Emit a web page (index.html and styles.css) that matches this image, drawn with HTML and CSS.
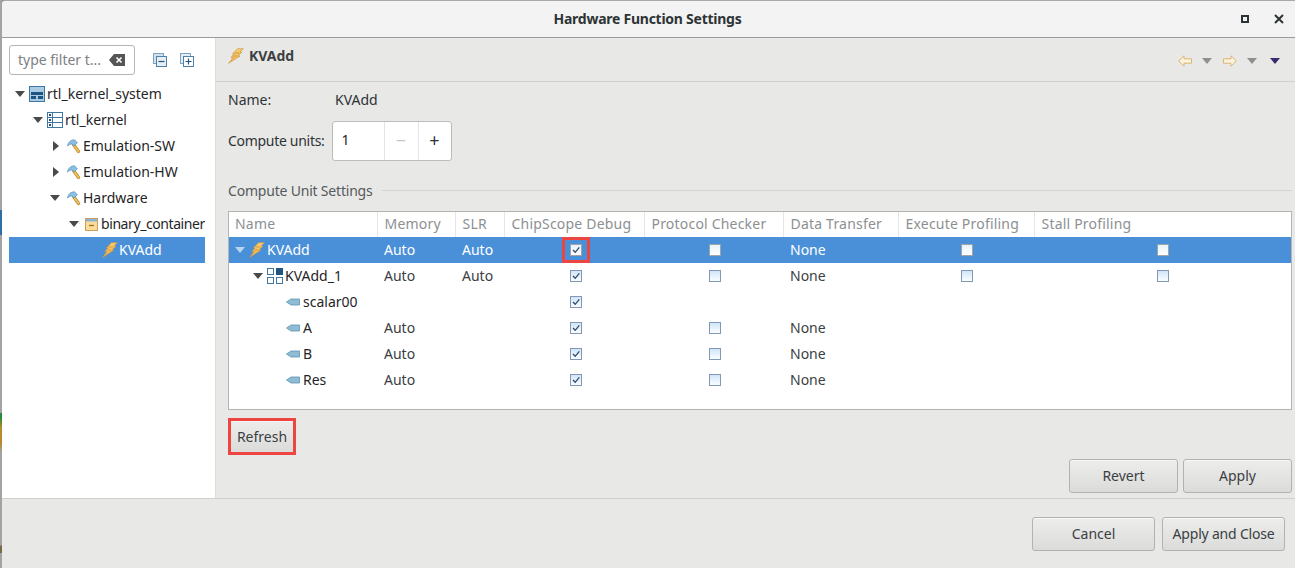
FILE: index.html
```html
<!DOCTYPE html>
<html lang="en">
<head>
<meta charset="utf-8">
<title>Hardware Function Settings</title>
<link rel="stylesheet" href="styles.css">
</head>
<body>
<svg class="defs" width="0" height="0" aria-hidden="true">
  <defs>
    <linearGradient id="cbfill" x1="0" y1="0" x2="0" y2="1"><stop offset="0" stop-color="#cde5f8"/><stop offset="1" stop-color="#fdfeff"/></linearGradient>
    <linearGradient id="cbfillsel" x1="0" y1="0" x2="0" y2="1"><stop offset="0" stop-color="#e6f3fd"/><stop offset="1" stop-color="#fff"/></linearGradient>
    <linearGradient id="boltfill" x1="0" y1="0" x2="0" y2="1"><stop offset="0" stop-color="#f7cf72"/><stop offset="1" stop-color="#eeb04a"/></linearGradient>
  </defs>
  <symbol id="bolt" viewBox="0 0 16 16"><path d="M9.500.7H15.300L12 4h2L10 8h2L.7 15.300 5 9.500H3L6 6H4.500z" fill="url(#boltfill)" stroke="#cf9a45" stroke-width=".7" stroke-linejoin="round"/><path d="M6.500 5h5M5.500 8h4" stroke="#c98d2e" stroke-width=".7"/></symbol>
  <symbol id="hammer" viewBox="0 0 14 16"><path d="M6.500 6.500l5 7" stroke="#bd8a2a" stroke-width="3.200" stroke-linecap="round"/><path d="M6.500 6.500l5 7" stroke="#f0c767" stroke-width="1.600" stroke-linecap="round"/><path d="M.5 8C1.300 4 4 1.800 7.500 1.800L10.300 4.700 7 8 5 6C3.500 6 2 6.500.5 8z" fill="#8cc0e2" stroke="#4f8fbd" stroke-width=".7" stroke-linejoin="round"/></symbol>
  <symbol id="down" viewBox="0 0 10 6"><path d="M0 0h10L5 6z"/></symbol>
  <symbol id="right" viewBox="0 0 6 10"><path d="M0 0l6 5-6 5z"/></symbol>
  <symbol id="port" viewBox="0 0 14 8"><path d="M.5 4L5 1h8.500v6H5z" fill="#8fbcd4" stroke="#5d93b2" stroke-width=".8"/></symbol>
  <symbol id="check" viewBox="0 0 12 12"><rect x=".5" y=".5" width="11" height="11" fill="url(#cbfill)" stroke="#8398b5"/></symbol>
  <symbol id="checked" viewBox="0 0 12 12"><rect x=".5" y=".5" width="11" height="11" fill="url(#cbfill)" stroke="#8398b5"/><path d="M3 6l2.200 2.300L9.300 3.300" fill="none" stroke="#2f4c6a" stroke-width="1.300"/></symbol>
  <symbol id="check-sel" viewBox="0 0 12 12"><rect x=".5" y=".5" width="11" height="11" fill="url(#cbfillsel)" stroke="#a0a4aa"/></symbol>
  <symbol id="checked-sel" viewBox="0 0 12 12"><rect x=".5" y=".5" width="11" height="11" fill="url(#cbfillsel)" stroke="#a0a4aa"/><path d="M3 6l2.200 2.300L9.300 3.300" fill="none" stroke="#2f4c6a" stroke-width="1.300"/></symbol>
</svg>

<div class="window">
  <div class="edge"></div>
  <div class="frame">
    <header class="titlebar">
      <h1 class="title">Hardware Function Settings</h1>
      <div class="winctl">
        <span class="maximize"></span>
        <svg class="close" width="10" height="10" viewBox="0 0 10 10"><path d="M1 1l8 8M9 1l-8 8" stroke="#2e3436" stroke-width="2"/></svg>
      </div>
    </header>

    <div class="body">
      <aside class="sidebar">
        <div class="filterbar">
          <div class="filter">
            <span class="filter-text">type filter t...</span>
            <svg width="16" height="12" viewBox="0 0 16 12"><path d="M5 0h11v12H5L0 6z" fill="#555"/><path d="M7.500 3.500l5 5M12.500 3.500l-5 5" stroke="#fff" stroke-width="1.600"/></svg>
          </div>
          <svg class="tool" width="14" height="14" viewBox="0 0 14 14"><rect x=".5" y=".5" width="10" height="10" fill="#cfe0ee" stroke="#7fa3c2"/><rect x="3.500" y="3.500" width="10" height="10" fill="#e6eff6" stroke="#4f81a8"/><path d="M5.500 8.500h6" stroke="#23557f" stroke-width="1.200"/></svg>
          <svg class="tool" width="14" height="14" viewBox="0 0 14 14"><rect x=".5" y=".5" width="10" height="10" fill="#e3ecf3" stroke="#7fa3c2"/><rect x="3.500" y="3.500" width="10" height="10" fill="#fff" stroke="#4f81a8"/><path d="M5.500 8.500h6M8.500 5.500v6" stroke="#23557f" stroke-width="1.200"/></svg>
        </div>
        <ul class="tree">
          <li class="node lvl0"><svg class="tw-d"><use href="#down"/></svg>
            <svg class="ico16" viewBox="0 0 16 16"><rect x=".5" y=".5" width="15" height="15" fill="#a9cbe4" stroke="#3f77a3"/><rect x="2" y="6" width="12" height="3" fill="#1f5583"/><rect x="2" y="10" width="5" height="3" fill="#1f5583"/><rect x="9" y="10" width="5" height="3" fill="#1f5583"/></svg>
            <span>rtl_kernel_system</span></li>
          <li class="node lvl1"><svg class="tw-d"><use href="#down"/></svg>
            <svg class="ico16" viewBox="0 0 16 16"><rect x=".5" y=".5" width="15" height="15" fill="#fff" stroke="#3f77a3"/><path d="M1 5.500h14M1 10.500h14M5.500 1v14" stroke="#3f77a3"/><rect x="2" y="2" width="2" height="2" fill="#1f4f7a"/><rect x="2" y="7" width="2" height="2" fill="#1f4f7a"/><rect x="2" y="12" width="2" height="2" fill="#1f4f7a"/></svg>
            <span>rtl_kernel</span></li>
          <li class="node lvl2"><svg class="tw-r"><use href="#right"/></svg><svg class="hammer"><use href="#hammer"/></svg><span>Emulation-SW</span></li>
          <li class="node lvl2"><svg class="tw-r"><use href="#right"/></svg><svg class="hammer"><use href="#hammer"/></svg><span>Emulation-HW</span></li>
          <li class="node lvl2"><svg class="tw-d"><use href="#down"/></svg><svg class="hammer"><use href="#hammer"/></svg><span>Hardware</span></li>
          <li class="node lvl3"><svg class="tw-d"><use href="#down"/></svg>
            <svg class="ico12" viewBox="0 0 13 13"><rect x=".5" y=".5" width="12" height="12" fill="#fbdc9b" stroke="#c9a05a"/><rect x="1" y="1" width="11" height="2.500" fill="#8ab4d6"/><path d="M4 7.500h5" stroke="#9c6f25" stroke-width="1.300"/></svg>
            <span class="tight">binary_container</span></li>
          <li class="node lvl4 selected"><svg class="bolt"><use href="#bolt"/></svg><span>KVAdd</span></li>
        </ul>
      </aside>

      <main class="main">
        <div class="pagehead">
          <svg class="bolt"><use href="#bolt"/></svg>
          <h2 class="pagetitle">KVAdd</h2>
          <div class="nav">
            <svg width="14" height="12" viewBox="0 0 14 12"><path d="M.7 6L6 .8v3h7.500v4.400H6v3z" fill="#fbf2dd" stroke="#d9b571"/></svg>
            <svg class="navdown"><use href="#down"/></svg>
            <svg width="14" height="12" viewBox="0 0 14 12"><path d="M13.300 6L8 .8v3H.5v4.400H8v3z" fill="#fbf2dd" stroke="#d9b571"/></svg>
            <svg class="navdown"><use href="#down"/></svg>
            <svg class="navmenu"><use href="#down"/></svg>
          </div>
        </div>

        <div class="form">
          <div class="namerow"><span class="lbl-name">Name:</span><span>KVAdd</span></div>
          <div class="unitsrow">
            <span class="lbl-units">Compute units:</span>
            <div class="spinner">
              <span class="sp-val">1</span>
              <span class="sp-btn sp-off">−</span>
              <span class="sp-btn">+</span>
            </div>
          </div>
          <div class="group"><span class="grouplabel">Compute Unit Settings</span><i class="rule"></i></div>

          <div class="tablebox">
            <table class="grid">
              <colgroup><col class="c1"><col class="c2"><col class="c3"><col class="c4"><col class="c5"><col class="c6"><col class="c7"><col class="c8"></colgroup>
              <thead>
                <tr><th>Name</th><th>Memory</th><th>SLR</th><th>ChipScope Debug</th><th>Protocol Checker</th><th>Data Transfer</th><th>Execute Profiling</th><th>Stall Profiling</th></tr>
              </thead>
              <tbody>
                <tr class="sel">
                  <td><div class="tn in0"><svg class="tw-d tw-light"><use href="#down"/></svg><svg class="bolt"><use href="#bolt"/></svg><span>KVAdd</span></div></td>
                  <td>Auto</td><td>Auto</td>
                  <td class="ck"><span class="redbox"><svg class="cb"><use href="#checked-sel"/></svg></span></td>
                  <td class="ck ckp"><svg class="cb"><use href="#check-sel"/></svg></td>
                  <td>None</td>
                  <td class="ck ckx"><svg class="cb"><use href="#check-sel"/></svg></td>
                  <td class="ck cks"><svg class="cb"><use href="#check-sel"/></svg></td>
                </tr>
                <tr>
                  <td><div class="tn in1"><svg class="tw-d"><use href="#down"/></svg>
                    <svg class="ico16" viewBox="0 0 16 16"><g fill="#fff" stroke="#3f77a3"><rect x=".5" y=".5" width="6" height="6"/><rect x=".5" y="9.500" width="6" height="6"/><rect x="9.500" y="9.500" width="6" height="6"/></g><rect x="9" y="0" width="7" height="7" fill="#1f5583"/></svg>
                    <span>KVAdd_1</span></div></td>
                  <td>Auto</td><td>Auto</td>
                  <td class="ck"><svg class="cb"><use href="#checked"/></svg></td>
                  <td class="ck ckp"><svg class="cb"><use href="#check"/></svg></td>
                  <td>None</td>
                  <td class="ck ckx"><svg class="cb"><use href="#check"/></svg></td>
                  <td class="ck cks"><svg class="cb"><use href="#check"/></svg></td>
                </tr>
                <tr>
                  <td><div class="tn in2"><svg class="port"><use href="#port"/></svg><span>scalar00</span></div></td>
                  <td></td><td></td>
                  <td class="ck"><svg class="cb"><use href="#checked"/></svg></td>
                  <td></td><td></td><td></td><td></td>
                </tr>
                <tr>
                  <td><div class="tn in2"><svg class="port"><use href="#port"/></svg><span>A</span></div></td>
                  <td>Auto</td><td></td>
                  <td class="ck"><svg class="cb"><use href="#checked"/></svg></td>
                  <td class="ck ckp"><svg class="cb"><use href="#check"/></svg></td>
                  <td>None</td><td></td><td></td>
                </tr>
                <tr>
                  <td><div class="tn in2"><svg class="port"><use href="#port"/></svg><span>B</span></div></td>
                  <td>Auto</td><td></td>
                  <td class="ck"><svg class="cb"><use href="#checked"/></svg></td>
                  <td class="ck ckp"><svg class="cb"><use href="#check"/></svg></td>
                  <td>None</td><td></td><td></td>
                </tr>
                <tr>
                  <td><div class="tn in2"><svg class="port"><use href="#port"/></svg><span>Res</span></div></td>
                  <td>Auto</td><td></td>
                  <td class="ck"><svg class="cb"><use href="#checked"/></svg></td>
                  <td class="ck ckp"><svg class="cb"><use href="#check"/></svg></td>
                  <td>None</td><td></td><td></td>
                </tr>
              </tbody>
            </table>
          </div>

          <div class="refreshrow"><button class="btn refresh">Refresh</button></div>
          <div class="applyrow">
            <button class="btn wide">Revert</button>
            <button class="btn wide">Apply</button>
          </div>
        </div>
      </main>
    </div>

    <footer class="footer">
      <button class="btn dlg">Cancel</button>
      <button class="btn dlg closebtn">Apply and Close</button>
    </footer>
  </div>
</div>
</body>
</html>
```
FILE: styles.css
```css
* { box-sizing: border-box; }
html, body { margin: 0; height: 100%; }
body {
  font-family: "Noto Sans", "Open Sans", sans-serif;
  font-size: 14px;
  color: #2e3436;
  background: #8c8c8c;
  overflow: hidden;
}
.defs { display: block; height: 0; }
ul { list-style: none; margin: 0; padding: 0; }
h1, h2 { margin: 0; }

.window { display: flex; width: 1295px; height: 568px; }
.edge {
  width: 2px;
  flex: none;
  background: linear-gradient(#a3a3a3 0 210px, #2f6ea5 210px 235px, #a3a3a3 235px 413px, #2c8a3c 413px 418px, #b78a2c 428px 443px, #a3a3a3 452px 545px, #7a6a4a 546px 553px, #a3a3a3 553px);
}
.frame { flex: 1; min-width: 0; display: flex; flex-direction: column; }

.titlebar {
  height: 38px;
  flex: none;
  display: flex;
  align-items: center;
  position: relative;
  background: #f3f3f3;
  border-top: 1px solid #a8a8a8;
  border-bottom: 1px solid #9a9a9a;
  border-top-left-radius: 3px;
}
.title {
  flex: 1;
  text-align: center;
  font-size: 14px;
  font-weight: 700;
  color: #2e3436;
  letter-spacing: -.25px;
  padding-right: 2px;
  line-height: 36px;
}
.winctl { position: absolute; right: 11px; top: 13px; display: flex; align-items: center; gap: 25px; }
.maximize { display: block; width: 8px; height: 8px; border: 2px solid #2e3436; }
.close { display: block; }

.body { flex: 1; display: flex; min-height: 0; }

.sidebar { width: 213px; flex: none; background: #fff; padding: 7px 10px 0 7px; }
.filterbar { display: flex; align-items: center; height: 30px; }
.filter {
  width: 126px;
  height: 30px;
  display: flex;
  align-items: center;
  justify-content: space-between;
  padding: 0 9px 0 8px;
  background: #fff;
  border: 1px solid #b5b5b1;
  border-radius: 3px;
}
.filter-text { color: #7d8083; font-size: 14px; white-space: nowrap; margin-bottom: 2px; }
.tool { margin-left: 18px; flex: none; }
.tool + .tool { margin-left: 13px; }

.tree { margin-top: 6px; }
.node {
  height: 26px;
  display: flex;
  align-items: center;
  white-space: nowrap;
  overflow: hidden;
  color: #1f2527;
}
.node span { margin-bottom: 2px; }
.lvl0 { padding-left: 6px; }
.lvl1 { padding-left: 24px; }
.lvl2 { padding-left: 42px; }
.lvl3 { padding-left: 60px; }
.lvl4 { padding-left: 93px; }
.selected { background: #4a90d9; color: #fff; }
.tight { letter-spacing: -.42px; }

.tw-d { width: 10px; height: 6px; fill: #4a4a4a; flex: none; margin-right: 4px; }
.tw-r { width: 6px; height: 10px; fill: #4a4a4a; flex: none; margin: 0 8px 0 2px; }
.tw-light { fill: #b9d5ef; }
.ico16 { width: 16px; height: 16px; flex: none; margin-right: 2px; }
.ico12 { width: 13px; height: 13px; flex: none; margin-right: 3px; margin-left: 2px; }
.hammer { width: 14px; height: 16px; flex: none; margin-right: 2px; }
.lvl2 .tw-d { margin-right: 7px; margin-left: -1px; }
.bolt { width: 16px; height: 16px; flex: none; margin-right: 1px; }

.main { flex: 1; min-width: 0; background: #e8e8e7; border-left: 1px solid #dcdcdb; display: flex; flex-direction: column; }
.pagehead {
  height: 44px;
  flex: none;
  display: flex;
  align-items: center;
  padding: 0 15px 8px 12px;
  border-bottom: 1px solid #d0d0ce;
}
.pagetitle { font-size: 14px; font-weight: 700; color: #3b4043; margin-left: 4px; }
.nav { margin-left: auto; margin-top: 10px; display: flex; align-items: center; height: 12px; }
.navdown { width: 10px; height: 6px; fill: #8f8f8f; margin: 0 11px 0 10px; }
.navmenu { width: 10px; height: 6px; fill: #3b2a6e; margin-left: 2px; }

.form { flex: 1; padding: 0 3px 0 12px; }
.namerow { height: 34px; display: flex; align-items: center; }
.lbl-name { width: 107px; }
.unitsrow { display: flex; align-items: center; gap: 7px; margin-top: 5px; height: 40px; }
.lbl-units { letter-spacing: -.3px; margin-bottom: 2px; }
.spinner {
  width: 120px;
  height: 40px;
  display: flex;
  background: #fff;
  border: 1px solid #bcbcb8;
  border-radius: 3px;
}
.sp-val { flex: 1; padding-left: 9px; line-height: 36px; color: #1f2527; }
.sp-btn { width: 33px; border-left: 1px solid #e4e4e2; text-align: center; font-size: 18px; line-height: 37px; color: #2e3436; }
.sp-off { color: #c5c7c7; width: 34px; }
.group { display: flex; align-items: center; gap: 9px; height: 20px; margin-top: 19px; color: #555a5c; }
.grouplabel { letter-spacing: -.2px; }
.rule { flex: 1; height: 1px; background: #d3d3d1; }

.tablebox { margin-top: 11px; height: 199px; background: #fff; border: 1px solid #b4b4b2; }
.grid { width: 1062px; table-layout: fixed; border-collapse: collapse; }
.c1 { width: 148px; } .c2 { width: 78px; } .c3 { width: 49px; } .c4 { width: 140px; }
.c5 { width: 139px; } .c6 { width: 115px; } .c7 { width: 136px; } .c8 { width: 257px; }
.grid th {
  height: 25px;
  padding: 0 0 2px 7px;
  text-align: left;
  font-weight: 400;
  letter-spacing: .2px;
  color: #8d9092;
  white-space: nowrap;
  overflow: hidden;
  border-right: 1px solid #e6e6e6;
}
.grid th:first-child { padding-left: 6px; }
.grid th:last-child { border-right: 0; }
.grid td { height: 26px; padding: 0 0 2px 7px; color: #3b4043; white-space: nowrap; }
.grid td:first-child { padding: 0 0 0 6px; }
.grid .sel td { background: #4a90d9; color: #fff; }
.tn { display: flex; align-items: center; color: #1f2527; }
.tn span { margin-bottom: 2px; }
.sel .tn { color: #fff; }
.in0 { padding-left: 0; }
.in1 { padding-left: 18px; }
.in2 { padding-left: 51px; }
.in0 .tw-d { margin-right: 4px; }
.in0 .bolt { margin-right: 2px; }
.port { width: 14px; height: 8px; flex: none; margin-right: 3px; }
.grid td.ck { padding: 0 0 0 4px; }
.grid td.ckp { padding: 0 0 0 2px; }
.grid td.ckx { padding: 0 0 0 2px; }
.grid td.cks { padding: 0; }
.cb { width: 12px; height: 12px; display: block; margin: 0 auto; }
.redbox { display: block; width: 28px; height: 26px; margin: 0 auto; padding-top: 4px; border: 3px solid #ee4540; }
.redbox .cb { margin-left: 5px; }

.btn {
  font: inherit;
  color: #3b4043;
  background: linear-gradient(#ededec, #dbdbd9);
  border: 1px solid #b2b2ae;
  border-radius: 3px;
  padding: 0 0 2px;
  height: 34px;
  box-shadow: inset 0 1px 0 #f7f7f7;
}
.refreshrow { margin-top: 8px; height: 37px; }
.refresh { width: 68px; height: 37px; padding: 0; border: 3px solid #ee4540; border-radius: 0; }
.applyrow { display: flex; justify-content: flex-end; gap: 5px; margin-top: 4px; }
.wide { width: 109px; }

.footer {
  height: 70px;
  flex: none;
  display: flex;
  justify-content: flex-end;
  gap: 7px;
  padding: 18px 10px 0 0;
  background: #e8e8e7;
  border-top: 1px solid #d0d0ce;
}
.dlg { width: 123px; }
.closebtn { letter-spacing: -.2px; }
```
